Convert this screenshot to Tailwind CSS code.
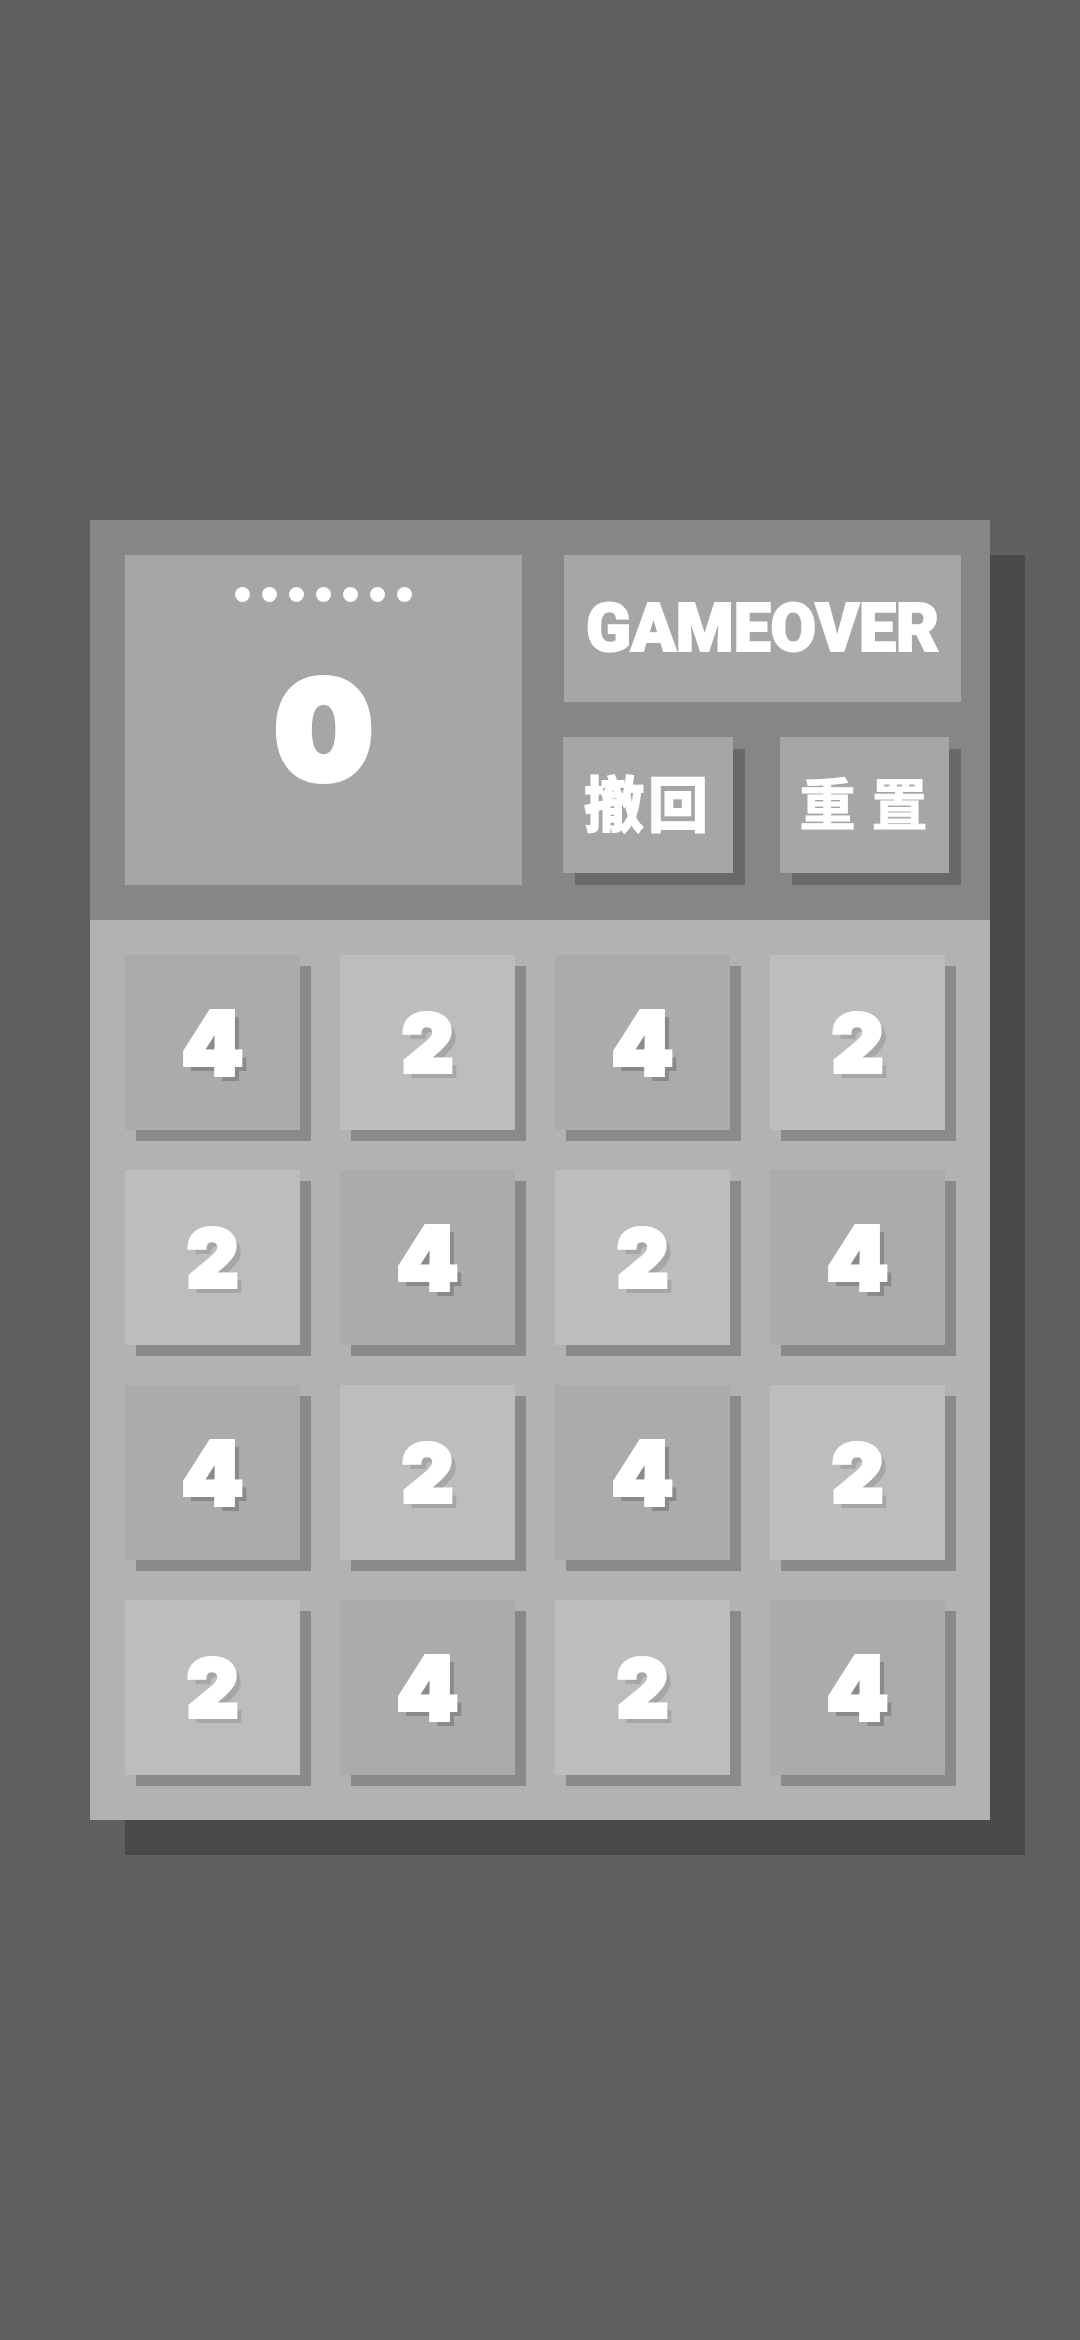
<!DOCTYPE html>
<html lang="zh">
<head>
<meta charset="utf-8">
<script src="https://cdn.jsdelivr.net/npm/@tailwindcss/browser@4"></script>
</head>
<body class="m-0 bg-[#606060]">
<main class="w-[1080px] h-[2340px] pt-[520px] pl-[90px] font-['Inter','Noto_Sans_CJK_SC',sans-serif] text-white overflow-hidden">
  <div class="w-[900px] shadow-[35px_35px_0_#4a4a4a]">
    <section class="h-[400px] bg-[#868686] flex pt-[35px] pl-[35px]">
      <div class="w-[397px] h-[330px] bg-[#a6a6a6] flex flex-col items-center">
        <div class="flex gap-[12px] mt-[32px]">
          <i class="w-[15px] h-[15px] rounded-full bg-white"></i><i class="w-[15px] h-[15px] rounded-full bg-white"></i><i class="w-[15px] h-[15px] rounded-full bg-white"></i><i class="w-[15px] h-[15px] rounded-full bg-white"></i><i class="w-[15px] h-[15px] rounded-full bg-white"></i><i class="w-[15px] h-[15px] rounded-full bg-white"></i><i class="w-[15px] h-[15px] rounded-full bg-white"></i>
        </div>
        <div class="mt-[53px] text-[136px] leading-[150px] font-black [-webkit-text-stroke:8px_white]">0</div>
      </div>
      <div class="ml-[42px] w-[398px]">
        <div class="w-[397px] h-[147px] bg-[#a6a6a6] flex items-center justify-center font-['Roboto',sans-serif] text-[66px] leading-none font-black [-webkit-text-stroke:2px_white]">GAMEOVER</div>
        <div class="flex gap-[47px] mt-[35px] -ml-[1px]">
          <button class="w-[170px] h-[136px] bg-[#a6a6a6] shadow-[12px_12px_0_#696969] text-[60px] leading-none font-bold tracking-[4px] [-webkit-text-stroke:2px_white]">撤回</button>
          <button class="w-[169px] h-[136px] bg-[#a6a6a6] shadow-[12px_12px_0_#696969] text-[56px] leading-none font-bold tracking-[16px] pl-[14px] [-webkit-text-stroke:1px_white]">重置</button>
        </div>
      </div>
    </section>
    <section class="h-[900px] bg-[#b2b2b2] grid grid-cols-[repeat(4,175px)] auto-rows-[175px] gap-x-[40px] gap-y-[40px] pt-[35px] pl-[35px] font-black [-webkit-text-stroke:4px_white] [&>div]:flex [&>div]:items-center [&>div]:justify-center [&>div]:shadow-[11px_11px_0_#8a8a8a]">
      <div class="bg-[#ababab] text-[88px] [text-shadow:6px_6px_0_#8a8a8a]">4</div>
      <div class="bg-[#bdbdbd] text-[80px] [text-shadow:6px_6px_0_#a6a6a6]">2</div>
      <div class="bg-[#ababab] text-[88px] [text-shadow:6px_6px_0_#8a8a8a]">4</div>
      <div class="bg-[#bdbdbd] text-[80px] [text-shadow:6px_6px_0_#a6a6a6]">2</div>
      <div class="bg-[#bdbdbd] text-[80px] [text-shadow:6px_6px_0_#a6a6a6]">2</div>
      <div class="bg-[#ababab] text-[88px] [text-shadow:6px_6px_0_#8a8a8a]">4</div>
      <div class="bg-[#bdbdbd] text-[80px] [text-shadow:6px_6px_0_#a6a6a6]">2</div>
      <div class="bg-[#ababab] text-[88px] [text-shadow:6px_6px_0_#8a8a8a]">4</div>
      <div class="bg-[#ababab] text-[88px] [text-shadow:6px_6px_0_#8a8a8a]">4</div>
      <div class="bg-[#bdbdbd] text-[80px] [text-shadow:6px_6px_0_#a6a6a6]">2</div>
      <div class="bg-[#ababab] text-[88px] [text-shadow:6px_6px_0_#8a8a8a]">4</div>
      <div class="bg-[#bdbdbd] text-[80px] [text-shadow:6px_6px_0_#a6a6a6]">2</div>
      <div class="bg-[#bdbdbd] text-[80px] [text-shadow:6px_6px_0_#a6a6a6]">2</div>
      <div class="bg-[#ababab] text-[88px] [text-shadow:6px_6px_0_#8a8a8a]">4</div>
      <div class="bg-[#bdbdbd] text-[80px] [text-shadow:6px_6px_0_#a6a6a6]">2</div>
      <div class="bg-[#ababab] text-[88px] [text-shadow:6px_6px_0_#8a8a8a]">4</div>
    </section>
  </div>
</main>
</body>
</html>
